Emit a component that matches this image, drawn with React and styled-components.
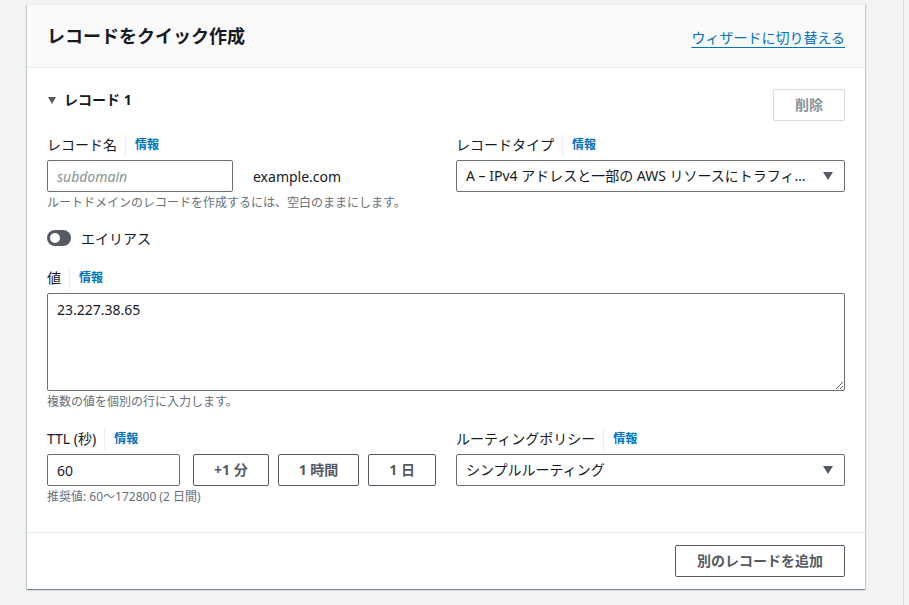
import React from "react";
import styled, { createGlobalStyle } from "styled-components";

const Global = createGlobalStyle`
  html, body { margin: 0; padding: 0; background: #f2f3f3; }
  body {
    font-family: "Noto Sans", "Noto Sans CJK JP", sans-serif;
    color: #16191f;
    -webkit-font-smoothing: antialiased;
  }
  * { box-sizing: border-box; }
`;

const Page = styled.div`
  display: flex;
  width: 909px;
  height: 605px;
  overflow: hidden;
`;

const Main = styled.div`
  flex: none;
  width: 903px;
  padding: 4px 38px 0 27px;
`;

const Sliver = styled.div`
  flex: 1;
  border-left: 1px solid #d5dbdb;
`;

const Card = styled.section`
  background: #fff;
  box-shadow: 0 1px 1px 0 rgba(0, 28, 36, 0.3), 1px 1px 1px 0 rgba(0, 28, 36, 0.15),
    -1px 1px 1px 0 rgba(0, 28, 36, 0.15);
  border-top: 1px solid #eaeded;
`;

const Header = styled.header`
  height: 63px;
  display: flex;
  align-items: center;
  justify-content: space-between;
  padding: 0 20px;
  background: #fafafa;
  border-bottom: 1px solid #eaeded;
`;

const Title = styled.h2`
  margin: 0;
  font-size: 18px;
  font-weight: 700;
  line-height: 24px;
  color: #16191f;
`;

const HeaderLink = styled.a`
  margin-top: 4px;
  font-size: 14px;
  line-height: 20px;
  color: #0073bb;
  text-decoration: underline;
  text-underline-offset: 4px;
  text-decoration-thickness: 1px;
`;

const Body = styled.div`
  padding: 21px 20px 27px;
  border-bottom: 1px solid #eaeded;
`;

const RecordHead = styled.div`
  height: 32px;
  display: flex;
  align-items: flex-start;
  justify-content: space-between;
`;

const RecordTitle = styled.div`
  display: flex;
  align-items: center;
  gap: 8px;
  font-size: 14px;
  font-weight: 700;
  line-height: 20px;
  padding-left: 1px;
  margin-top: 1px;
`;

const Caret = styled.span`
  flex: none;
  width: 0;
  height: 0;
  border-left: ${(p) => p.$w / 2}px solid transparent;
  border-right: ${(p) => p.$w / 2}px solid transparent;
  border-top: ${(p) => p.$h}px solid #545b64;
`;

const Button = styled.button`
  height: 32px;
  padding: 0 ${(p) => (p.$compact ? 20 : 21)}px;
  background: #fff;
  border: 1px solid ${(p) => (p.disabled ? "#d5dbdb" : "#545b64")};
  border-radius: 2px;
  font-family: inherit;
  font-size: 14px;
  font-weight: 700;
  line-height: 20px;
  color: ${(p) => (p.disabled ? "#879596" : "#545b64")};
  white-space: nowrap;
  flex: none;
`;

const Grid = styled.div`
  display: grid;
  grid-template-columns: minmax(0, 1fr) minmax(0, 1fr);
  column-gap: 20px;
  margin-top: ${(p) => p.$mt}px;
`;

const Field = styled.div`
  display: flex;
  flex-direction: column;
  min-width: 0;
  margin-top: ${(p) => p.$mt || 0}px;
`;

const LabelRow = styled.div`
  display: flex;
  align-items: center;
  height: 22px;
  margin-bottom: 4px;
`;

const Label = styled.span`
  font-size: 14px;
  line-height: 20px;
  color: #16191f;
  padding-right: 8px;
`;

const Info = styled.a`
  font-size: 12px;
  font-weight: 700;
  line-height: 22px;
  color: #0073bb;
  padding-left: 9px;
  border-left: 1px solid #eaeded;
`;

const Hint = styled.div`
  margin-top: 3px;
  font-size: 12px;
  line-height: 16px;
  color: #687078;
  white-space: nowrap;
`;

const InputLine = styled.div`
  display: flex;
  align-items: center;
`;

const TextInput = styled.input`
  height: 32px;
  width: ${(p) => (p.$w ? `${p.$w}px` : "auto")};
  flex: ${(p) => (p.$w ? "none" : "1")};
  min-width: 0;
  padding: 0 9px;
  border: 1px solid #687078;
  border-radius: 2px;
  font-family: inherit;
  font-size: 14px;
  color: #16191f;
  background: #fff;
  &::placeholder {
    color: #879596;
    font-style: italic;
  }
`;

const Suffix = styled.span`
  margin-left: 20px;
  font-size: 14px;
  color: #16191f;
`;

const Select = styled.div`
  height: 32px;
  display: flex;
  align-items: center;
  padding: 0 11px 0 9px;
  border: 1px solid #687078;
  border-radius: 2px;
  background: #fff;
  gap: 16px;
`;

const SelectText = styled.span`
  flex: 1;
  min-width: 0;
  font-size: 14px;
  line-height: 20px;
  color: #16191f;
  white-space: nowrap;
  overflow: hidden;
  text-overflow: ellipsis;
`;

const ToggleRow = styled.div`
  display: flex;
  align-items: center;
  gap: 10px;
  height: 20px;
  margin-top: 17px;
  font-size: 14px;
  color: #16191f;
`;

const Toggle = styled.span`
  position: relative;
  width: 24px;
  height: 16px;
  border-radius: 8px;
  background: #545b64;
  &::after {
    content: "";
    position: absolute;
    left: 3px;
    top: 3px;
    width: 10px;
    height: 10px;
    border-radius: 50%;
    background: #fff;
  }
`;

const TextArea = styled.textarea`
  height: 98px;
  padding: 6px 9px;
  border: 1px solid #687078;
  border-radius: 2px;
  font-family: inherit;
  font-size: 14px;
  line-height: 20px;
  color: #16191f;
  background: #fff;
  resize: vertical;
`;

const Quick = styled.div`
  display: flex;
  gap: 9px;
  margin-left: 13px;
`;

const Footer = styled.footer`
  display: flex;
  justify-content: flex-end;
  padding: 12px 20px 12px;
`;

const Triangle = ({ w, h }) => <Caret $w={w} $h={h} />;

export default function App() {
  return (
    <>
      <Global />
      <Page>
        <Main>
          <Card>
            <Header>
              <Title>レコードをクイック作成</Title>
              <HeaderLink>ウィザードに切り替える</HeaderLink>
            </Header>
            <Body>
              <RecordHead>
                <RecordTitle>
                  <Triangle w={9} h={7} />
                  レコード 1
                </RecordTitle>
                <Button disabled>削除</Button>
              </RecordHead>

              <Grid $mt={13}>
                <Field>
                  <LabelRow>
                    <Label>レコード名</Label>
                    <Info>情報</Info>
                  </LabelRow>
                  <InputLine>
                    <TextInput $w={186} placeholder="subdomain" />
                    <Suffix>example.com</Suffix>
                  </InputLine>
                  <Hint>ルートドメインのレコードを作成するには、空白のままにします。</Hint>
                </Field>
                <Field>
                  <LabelRow>
                    <Label>レコードタイプ</Label>
                    <Info>情報</Info>
                  </LabelRow>
                  <Select>
                    <SelectText>
                      A – IPv4 アドレスと一部の AWS リソースにトラフィックをルーティング
                    </SelectText>
                    <Triangle w={11} h={8} />
                  </Select>
                </Field>
              </Grid>

              <ToggleRow>
                <Toggle />
                エイリアス
              </ToggleRow>

              <Field $mt={19}>
                <LabelRow>
                  <Label>値</Label>
                  <Info>情報</Info>
                </LabelRow>
                <TextArea defaultValue="23.227.38.65" />
                <Hint>複数の値を個別の行に入力します。</Hint>
              </Field>

              <Grid $mt={18}>
                <Field>
                  <LabelRow>
                    <Label>TTL (秒)</Label>
                    <Info>情報</Info>
                  </LabelRow>
                  <InputLine>
                    <TextInput defaultValue="60" />
                    <Quick>
                      <Button $compact>+1 分</Button>
                      <Button $compact>1 時間</Button>
                      <Button $compact>1 日</Button>
                    </Quick>
                  </InputLine>
                  <Hint>推奨値: 60〜172800 (2 日間)</Hint>
                </Field>
                <Field>
                  <LabelRow>
                    <Label>ルーティングポリシー</Label>
                    <Info>情報</Info>
                  </LabelRow>
                  <Select>
                    <SelectText>シンプルルーティング</SelectText>
                    <Triangle w={11} h={8} />
                  </Select>
                </Field>
              </Grid>
            </Body>
            <Footer>
              <Button>別のレコードを追加</Button>
            </Footer>
          </Card>
        </Main>
        <Sliver />
      </Page>
    </>
  );
}
